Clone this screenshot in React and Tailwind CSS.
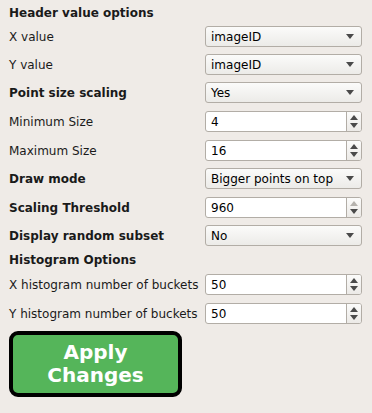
const Caret = () => (
  <svg width="8" height="5" viewBox="0 0 8 5" className="shrink-0">
    <path d="M0 0 H8 L4 5 Z" fill="#4a4a4a" />
  </svg>
);

const Combo = ({ value }) => (
  <div className="h-[21px] w-[157px] flex items-center justify-between pl-[5px] pr-[7px] rounded-[3px] border border-[#b2ada6] bg-gradient-to-b from-[#fbfbfa] to-[#ecebe8] text-[12px] text-black">
    <span>{value}</span>
    <Caret />
  </div>
);

const Spin = ({ value, upDisabled }) => (
  <div className="h-[21px] w-[157px] flex rounded-[3px] border border-[#b2ada6] bg-white text-[12px] text-black overflow-hidden">
    <div className="flex-1 flex items-center pl-[5px]">{value}</div>
    <div className="w-[15px] border-l border-[#b2ada6] bg-gradient-to-b from-[#fbfbfa] to-[#eceae7] flex flex-col items-center justify-center gap-[3px]">
      <svg width="8" height="5" viewBox="0 0 8 5">
        <path d="M0 5 H8 L4 0 Z" fill={upDisabled ? '#b5b2ad' : '#4a4a4a'} />
      </svg>
      <svg width="8" height="5" viewBox="0 0 8 5">
        <path d="M0 0 H8 L4 5 Z" fill="#4a4a4a" />
      </svg>
    </div>
  </div>
);

const Row = ({ label, bold, className = '', children }) => (
  <div className={`h-[21px] flex items-center justify-between ${className}`}>
    <span className={bold ? 'font-bold' : ''}>{label}</span>
    {children}
  </div>
);

export default function App() {
  return (
    <div className="w-[372px] h-[413px] bg-[#efebe7] font-['DejaVu_Sans',sans-serif] text-[12px] text-[#1a1a1a] pt-[2px] pl-[9px] pr-[10px]">
      <div className="h-[21px] flex items-center font-bold">Header value options</div>
      <Row label="X value" className="mt-[3px]"><Combo value="imageID" /></Row>
      <Row label="Y value" className="mt-[7px]"><Combo value="imageID" /></Row>
      <Row label="Point size scaling" bold className="mt-[7px]"><Combo value="Yes" /></Row>
      <Row label="Minimum Size" className="mt-[8px]"><Spin value="4" /></Row>
      <Row label="Maximum Size" className="mt-[8px]"><Spin value="16" /></Row>
      <Row label="Draw mode" bold className="mt-[7px]"><Combo value="Bigger points on top" /></Row>
      <Row label="Scaling Threshold" bold className="mt-[8px]"><Spin value="960" upDisabled /></Row>
      <Row label="Display random subset" bold className="mt-[7px]"><Combo value="No" /></Row>
      <div className="h-[21px] mt-[3px] flex items-center font-bold">Histogram Options</div>
      <Row label="X histogram number of buckets" className="mt-[4px]"><Spin value="50" /></Row>
      <Row label="Y histogram number of buckets" className="mt-[8px]"><Spin value="50" /></Row>
      <button className="mt-[7px] w-[173px] h-[66px] rounded-[9px] border-[4px] border-black bg-[#55b55a] text-white font-bold text-[20px] leading-[23px] flex flex-col items-center justify-center">
        <span>Apply</span>
        <span>Changes</span>
      </button>
    </div>
  );
}
